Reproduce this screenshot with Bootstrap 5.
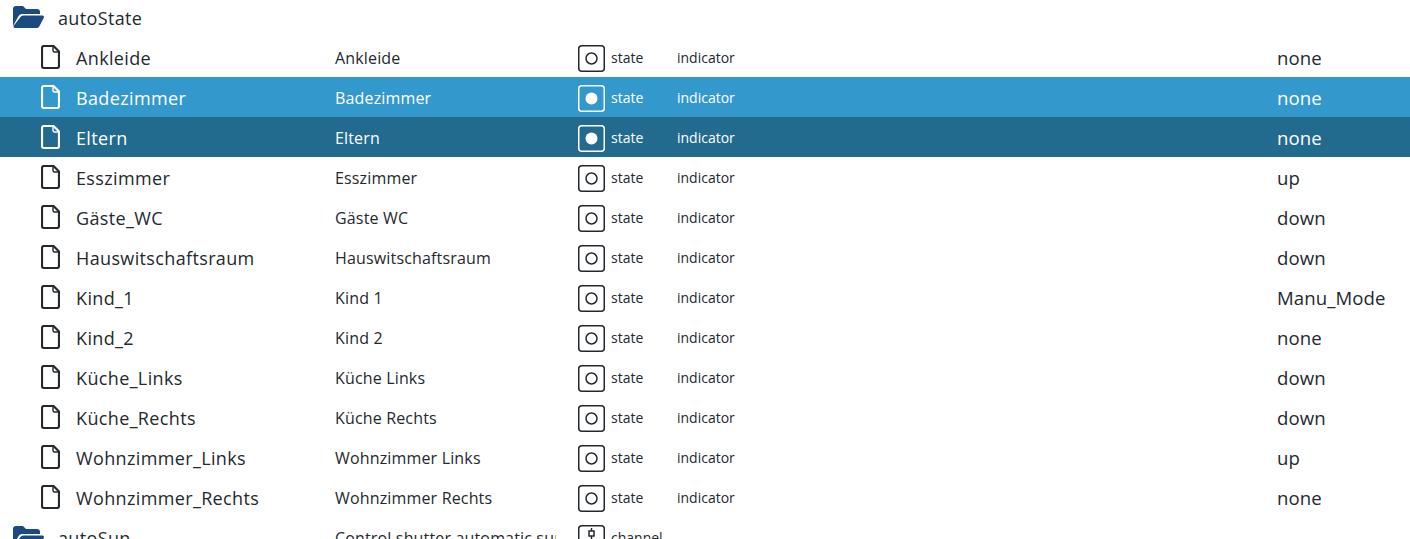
<!DOCTYPE html>
<html lang="de">
<head>
<meta charset="utf-8">
<title>autoState</title>
<link rel="stylesheet" href="https://cdn.jsdelivr.net/npm/bootstrap@5.3.0/dist/css/bootstrap.min.css">
<style>
html,body{height:539px;overflow:hidden;background:#fff}
body{font-family:"Open Sans","Noto Sans",sans-serif;color:#212529}
.tree-wrap{margin-top:-3px}
.tree-row{height:40px;color:#24292f;padding-top:2px}
.row-sel{background:#3399cc;color:#fff}
.row-act{background:#226a8e;color:#fff}
.cell-name{width:335px;padding-left:76px;font-size:18px;letter-spacing:.36px}
.cell-name.folder-name{padding-left:58px;}
.cell-title{width:221px;margin-right:22px;margin-top:-1px;font-size:16px;letter-spacing:.16px}
.cell-kind{width:99px;font-size:14px}
.kind-label{margin-top:-2px}
.cell-role{width:600px;font-size:14px;margin-top:-2px}
.cell-val{font-size:18.6px;letter-spacing:.1px}
.ico-file{margin-left:-35px;margin-right:16px;width:19px;height:24px;flex:none;margin-top:-2px}
.ico-folder{margin-left:-45px;margin-right:14px;width:31px;height:22px;flex:none;color:#1a4a80;margin-top:-3px}
.ico-type{width:27px;height:27px;flex:none;margin-right:6px}
</style>
</head>
<body>
<svg width="0" height="0" class="d-block">
<defs>
<symbol id="s-file" viewBox="0 0 19 24"><path d="M3 1h9.500l5.500 5.500V21a2 2 0 0 1-2 2H3a2 2 0 0 1-2-2V3a2 2 0 0 1 2-2z" fill="none" stroke="currentColor" stroke-width="2.200" stroke-linejoin="round"/><path d="M12 1v4.500A1.500 1.500 0 0 0 13.500 7H18" fill="none" stroke="currentColor" stroke-width="1.400"/></symbol>
<symbol id="s-folder" viewBox="0 0 31 22"><path d="M0 3a3 3 0 0 1 3-3h7l3 3h11a3 3 0 0 1 3 3v2H9a4 4 0 0 0-3.700 2.500L0 20z" fill="currentColor"/><path d="M7.500 11A3 3 0 0 1 10 9.500h19.500a1.500 1.500 0 0 1 1.300 2.200l-4.300 8.300a3 3 0 0 1-2.700 2H2a1.500 1.500 0 0 1-1.300-2.200z" fill="currentColor"/></symbol>
<symbol id="s-state" viewBox="0 0 27 27"><rect x=".75" y=".75" width="25.500" height="25.500" rx="3" fill="none" stroke="currentColor" stroke-width="1.500"/><circle cx="13.500" cy="13.500" r="5.500" fill="none" stroke="currentColor" stroke-width="1.500"/></symbol>
<symbol id="s-state-on" viewBox="0 0 27 27"><rect x=".75" y=".75" width="25.500" height="25.500" rx="3" fill="none" stroke="currentColor" stroke-width="1.500"/><circle cx="13.500" cy="13.500" r="6" fill="currentColor"/></symbol>
<symbol id="s-channel" viewBox="0 0 27 27"><rect x=".75" y=".75" width="25.500" height="25.500" rx="3" fill="none" stroke="currentColor" stroke-width="1.500"/><path d="M13.500 3v21" stroke="currentColor" stroke-width="1.500"/><rect x="11" y="6" width="5" height="5" fill="#fff" stroke="currentColor" stroke-width="1.500"/></symbol>
</defs>
</svg>
<div class="tree-wrap" id="tree"></div>
<script>
const rows=[["Ankleide","Ankleide","none"],["Badezimmer","Badezimmer","none","row-sel"],["Eltern","Eltern","none","row-act"],["Esszimmer","Esszimmer","up"],["Gäste_WC","Gäste WC","down"],["Hauswitschaftsraum","Hauswitschaftsraum","down"],["Kind_1","Kind 1","Manu_Mode"],["Kind_2","Kind 2","none"],["Küche_Links","Küche Links","down"],["Küche_Rechts","Küche Rechts","down"],["Wohnzimmer_Links","Wohnzimmer Links","up"],["Wohnzimmer_Rechts","Wohnzimmer Rechts","none"]];
const icon=(id,c)=>`<svg class="${c}"><use href="#${id}"/></svg>`;
const line=(cls,nameCls,ic,name,title,type,kind,role,val)=>`<div class="tree-row d-flex align-items-center ${cls}"><div class="cell-name d-flex align-items-center ${nameCls}">${ic}<span>${name}</span></div><div class="cell-title text-nowrap overflow-hidden">${title}</div><div class="cell-kind d-flex align-items-center">${type?icon(type,'ico-type'):''}<span class="kind-label">${kind}</span></div><div class="cell-role">${role}</div><div class="cell-val">${val}</div></div>`;
let h=line('','folder-name',icon('s-folder','ico-folder'),'autoState','','','','','');
for(const r of rows){h+=line(r[3]||'','',icon('s-file','ico-file'),r[0],r[1],r[3]?'s-state-on':'s-state','state','indicator',r[2]);}
h+=line('','folder-name',icon('s-folder','ico-folder'),'autoSun','Control shutter automatic sun','s-channel','channel','','');
document.getElementById('tree').innerHTML=h;
</script>
<script src="https://cdn.jsdelivr.net/npm/bootstrap@5.3.0/dist/js/bootstrap.bundle.min.js"></script>
</body>
</html>
